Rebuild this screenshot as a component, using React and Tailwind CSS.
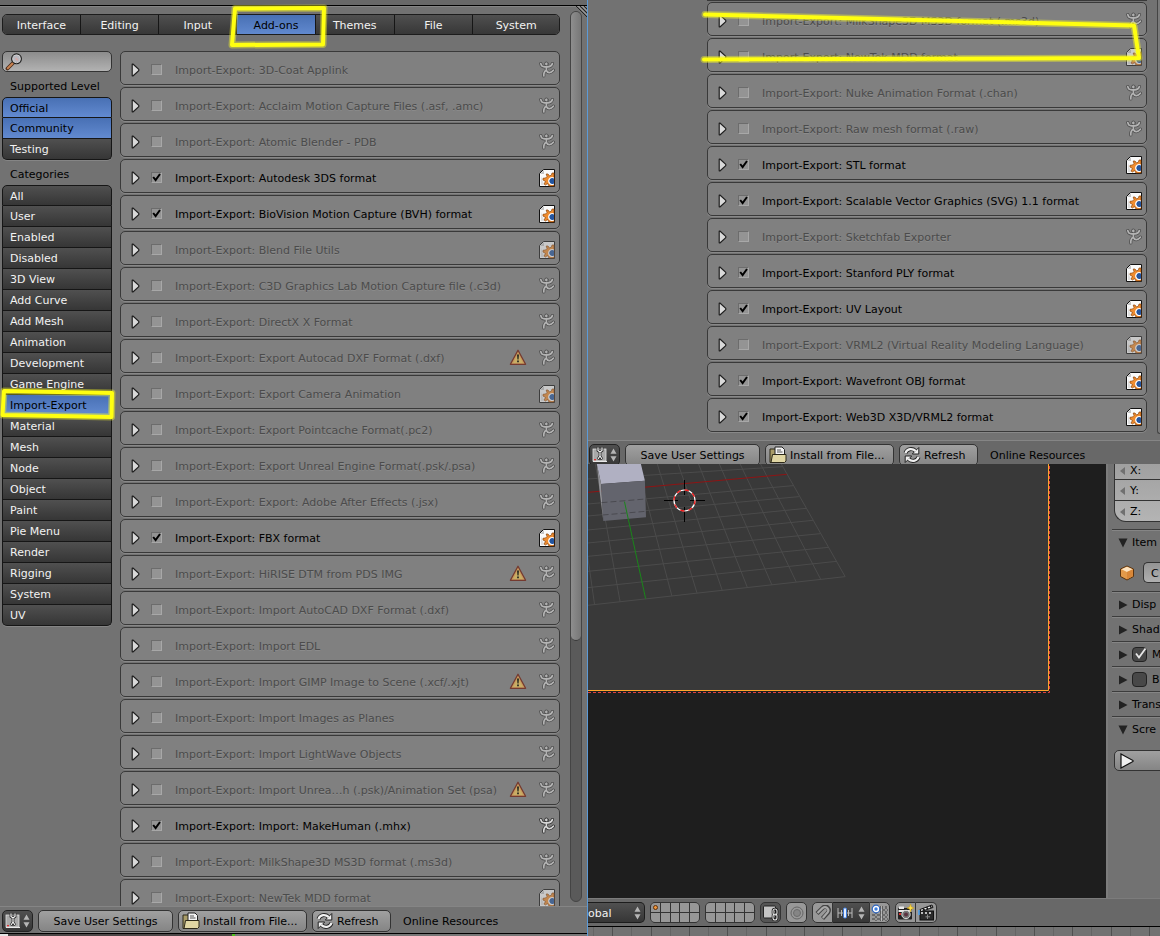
import React from "react";

const TABS = ["Interface", "Editing", "Input", "Add-ons", "Themes", "File", "System"];

const CATEGORIES = [
  "All", "User", "Enabled", "Disabled", "3D View", "Add Curve", "Add Mesh",
  "Animation", "Development", "Game Engine", "Import-Export", "Material",
  "Mesh", "Node", "Object", "Paint", "Pie Menu", "Render", "Rigging",
  "System", "UV",
];

const LEFT_ADDONS = [
  { name: "3D-Coat Applink" },
  { name: "Acclaim Motion Capture Files (.asf, .amc)" },
  { name: "Atomic Blender - PDB" },
  { name: "Autodesk 3DS format", on: true, official: true },
  { name: "BioVision Motion Capture (BVH) format", on: true, official: true },
  { name: "Blend File Utils", official: true },
  { name: "C3D Graphics Lab Motion Capture file (.c3d)" },
  { name: "DirectX X Format" },
  { name: "Export Autocad DXF Format (.dxf)", warn: true },
  { name: "Export Camera Animation", official: true },
  { name: "Export Pointcache Format(.pc2)" },
  { name: "Export Unreal Engine Format(.psk/.psa)" },
  { name: "Export: Adobe After Effects (.jsx)" },
  { name: "FBX format", on: true, official: true },
  { name: "HiRISE DTM from PDS IMG", warn: true },
  { name: "Import AutoCAD DXF Format (.dxf)" },
  { name: "Import EDL" },
  { name: "Import GIMP Image to Scene (.xcf/.xjt)", warn: true },
  { name: "Import Images as Planes" },
  { name: "Import LightWave Objects" },
  { name: "Import Unrea…h (.psk)/Animation Set (psa)", warn: true },
  { name: "Import: MakeHuman (.mhx)", on: true },
  { name: "MilkShape3D MS3D format (.ms3d)" },
  { name: "NewTek MDD format", official: true },
];

const RIGHT_ADDONS = [
  { name: "MilkShape3D MS3D format (.ms3d)" },
  { name: "NewTek MDD format", official: true },
  { name: "Nuke Animation Format (.chan)" },
  { name: "Raw mesh format (.raw)" },
  { name: "STL format", on: true, official: true },
  { name: "Scalable Vector Graphics (SVG) 1.1 format", on: true, official: true },
  { name: "Sketchfab Exporter" },
  { name: "Stanford PLY format", on: true, official: true },
  { name: "UV Layout", on: true, official: true },
  { name: "VRML2 (Virtual Reality Modeling Language)", official: true },
  { name: "Wavefront OBJ format", on: true, official: true },
  { name: "Web3D X3D/VRML2 format", on: true, official: true },
];

const DARK = "bg-linear-to-b from-[#505050] to-[#363636] text-[#f2f2f2]";
const BLUE = "bg-linear-to-b from-[#4870b4] to-[#628ad0] text-black";
const TOOL =
  "flex h-[22px] shrink-0 items-center rounded-[5px] border border-[#333] bg-linear-to-b from-[#a0a0a0] to-[#858585] text-black shadow-[0_1px_0_#858585]";

function CommunityIcon() {
  return (
    <svg viewBox="0 0 16 17" className="h-[17px] w-4" fill="none" strokeLinecap="round" strokeLinejoin="round">
      <g stroke="#2e2e2e" strokeWidth="3.2">
        <path d="M1.8 2.6 C2.3 4.8 3.6 5.8 5.4 5.8 H9 C11 5.8 12.6 4.6 13.4 2.6 M7.4 6 V9.4 M7.4 9.4 C5 10.2 4.6 11.5 4.8 15 M7.4 9.4 C8.6 12.6 11.8 12.2 14.4 9.2" />
      </g>
      <circle cx="7.4" cy="2.900" r="1.900" fill="#d0d0d0" stroke="#2e2e2e" strokeWidth="0.900" />
      <g stroke="#d6d6d6" strokeWidth="1.700">
        <path d="M1.8 2.6 C2.3 4.8 3.6 5.8 5.4 5.8 H9 C11 5.8 12.6 4.6 13.4 2.6 M7.4 6 V9.4 M7.4 9.4 C5 10.2 4.6 11.5 4.8 15 M7.4 9.4 C8.6 12.6 11.8 12.2 14.4 9.2" />
      </g>
    </svg>
  );
}

function OfficialIcon() {
  return (
    <svg viewBox="0 0 16 18" className="h-[18px] w-4">
      <path d="M4.500 0.500 H15.500 V17.500 H0.500 V4.500 Z" fill="#fafafa" stroke="#111" />
      <path d="M1 5 H5 V1 Z" fill="#c4c4c4" />
      <path d="M2 7 V16 H5 Z" fill="#dedede" />
      <path
        d="M8 7.500 L7.200 5 L9 5 L10.500 7 L12.500 6 L13 4 L15 4 V17 H10 L8.500 14.500 L6.500 16 L5 15 L6.500 12.500 L4 11 V9.300 L6.500 9 Z"
        fill="#ee8c30" stroke="#8a4208" strokeWidth="0.700"
      />
      <path d="M15 8.500 A4 4 0 1 0 15 15.500 Z" fill="#fff" />
      <path d="M15 9.500 A3 3 0 1 0 15 14.500 Z" fill="#24559f" />
    </svg>
  );
}

function WarningIcon() {
  return (
    <svg viewBox="0 0 18 17" className="h-[17px] w-[18px]">
      <path d="M9 1.3 L16.6 15.3 H1.4 Z" fill="#c89a5c" stroke="#743a30" strokeWidth="1.3" strokeLinejoin="round" />
      <path d="M9 4.500 L13.800 14 H4.200 Z" fill="#c9ae66" />
      <path d="M8 5.500 H10 L9.6 10.5 H8.4 Z M8.1 11.5 H9.9 V13.2 H8.1 Z" fill="#2c2c22" />
    </svg>
  );
}

function AddonRow({ addon, side }) {
  const id = side + "-" + addon.name.replace(/\W+/g, "-");
  return (
    <li className="flex h-[34px] shrink-0 items-center rounded-[5px] border border-[#393939] bg-[#808080] pt-[3px] pr-1 pl-2.5 shadow-[0_1px_0_#888]">
      <button type="button" aria-label={"Expand " + addon.name} className="shrink-0">
        <svg viewBox="0 0 9 14" className="h-3.5 w-[9px]">
          <path d="M1.2 1.2 V12.8 L2.2 12.8 L7.8 7.6 V6.4 L2.2 1.2 Z" fill="#d9d9d9" stroke="#202020" strokeWidth="1.2" strokeLinejoin="round" />
        </svg>
      </button>
      <span className="relative ml-[11px] flex size-[11px] shrink-0">
        <input
          id={id}
          type="checkbox"
          defaultChecked={!!addon.on}
          className="peer size-[11px] appearance-none border border-t-[#6c6c6c] border-r-[#a8a8a8] border-b-[#a8a8a8] border-l-[#6c6c6c] bg-[#949494]"
        />
        <svg viewBox="0 0 11 11" className="pointer-events-none absolute inset-0 hidden size-[11px] peer-checked:block">
          <path d="M2.2 5 L4.6 8 L9 2" fill="none" stroke="#000" strokeWidth="2" />
        </svg>
      </span>
      <label
        htmlFor={id}
        className={"ml-[13px] min-w-0 flex-1 truncate pt-0.5 " + (addon.on ? "text-black" : "text-[#4b4b4b] [text-shadow:0_1px_0_#8c8c8c]")}
      >
        {"Import-Export: " + addon.name}
      </label>
      {addon.warn && (
        <span className="mr-3 shrink-0">
          <WarningIcon />
        </span>
      )}
      <span className={"shrink-0 " + (addon.on ? "" : "opacity-60")}>
        {addon.official ? <OfficialIcon /> : <CommunityIcon />}
      </span>
    </li>
  );
}

function UpDown() {
  return (
    <svg viewBox="0 0 7 14" className="h-3.5 w-[7px] shrink-0">
      <path d="M3.5 0.5 L6.5 5.7 H0.5 Z M3.5 13.5 L6.5 8.3 H0.5 Z" fill="#b5b5b5" />
    </svg>
  );
}

function HeaderBar() {
  return (
    <>
      <button type="button" aria-label="Editor type" className={"mr-[5px] flex h-[22px] w-[31px] shrink-0 items-center justify-center gap-0.5 rounded-[5px] border border-[#222] " + DARK}>
        <svg viewBox="0 0 16 16" className="size-4">
          <rect x="1" y="2" width="13" height="12" fill="#a9a9a9" stroke="#e0e0e0" strokeWidth="0.8" />
          <path d="M1 14.5 H15" stroke="#e8e8e8" />
          <path d="M6 0.500 V3.500 L8 5 L10 3.500 V0.500 M8 5 V9 M6 12.500 L8 9 L10 12.500" stroke="#222" strokeWidth="2.800" fill="none" />
          <path d="M6 0.500 V3.500 L8 5 L10 3.500 V0.500 M8 5 V9 M6 12 L8 9 L10 12" stroke="#f4f4f4" strokeWidth="1.200" fill="none" />
          <rect x="2" y="12" width="2" height="1.3" fill="#e03030" />
        </svg>
        <UpDown />
      </button>
      <button type="button" className={TOOL + " mr-[5px] w-[135px] justify-center"}>
        <span className="pt-0.5">Save User Settings</span>
      </button>
      <button type="button" className={TOOL + " mr-[5px] w-[129px] gap-[3px] pl-[3px]"}>
        <svg viewBox="0 0 18 18" className="size-[18px] shrink-0">
          <path d="M1 3 H6 L7.5 5 V16.5 H1 Z" fill="#a99c68" stroke="#2c2819" />
          <path d="M6 1 H13 L15.5 3.5 V10 H6 Z" fill="#f4f4f4" stroke="#222" />
          <path d="M8 4 H12 M8 6 H13.5" stroke="#555" />
          <path d="M3.5 8.5 H17 V15 L15.5 16.5 H2 Z" fill="#e0d6a3" stroke="#2c2819" />
        </svg>
        <span className="pt-0.5">Install from File...</span>
      </button>
      <button type="button" className={TOOL + " mr-3 w-[79px] gap-[3px] pl-[3px]"}>
        <svg viewBox="0 0 18 18" className="size-[18px] shrink-0" fill="none" strokeLinejoin="round">
          <g stroke="#222" strokeWidth="4">
            <path d="M2.5 7 C4 2.5 9.5 2 12.5 5 M15.5 11 C14 15.5 8.5 16 5.5 13" />
          </g>
          <path d="M15.8 1.5 V8 H9.3 Z M2.2 16.5 V10 H8.7 Z" fill="#f0f0f0" stroke="#222" strokeWidth="1" />
          <path d="M2.5 7 C4 2.5 9.5 2 12.8 5.2 M15.5 11 C14 15.5 8.5 16 5.2 12.8" stroke="#f0f0f0" strokeWidth="2.3" />
        </svg>
        <span className="pt-0.5">Refresh</span>
      </button>
      <a href="#resources" className="leading-6 text-black">Online Resources</a>
    </>
  );
}

function OptionGroup({ items, selected }) {
  return (
    <div className="flex flex-col rounded-b-[5px] shadow-[0_1px_0_#858585]">
      {items.map((t) => (
        <button
          key={t}
          type="button"
          className={
            "h-[21px] border-x border-b border-[#161616] pt-0.5 pl-[7px] text-left leading-[18px] first:rounded-t-[5px] first:border-t last:rounded-b-[5px] " +
            (selected.includes(t) ? BLUE : DARK)
          }
        >
          {t}
        </button>
      ))}
    </div>
  );
}

function Preferences() {
  return (
    <section className="relative flex min-w-0 flex-col overflow-hidden border-r border-[#5b9ad8] bg-[#727272]">
      <div className="h-1.5 shrink-0 border-b border-black bg-[#686868]" />
      <div className="flex min-h-0 flex-1 gap-2.5 overflow-hidden border-t border-[#858585] pr-[5px] pl-0.5">
        <div className="flex min-w-0 flex-1 flex-col gap-4 overflow-hidden pt-[7px]">
          <nav className="grid h-[21px] shrink-0 grid-cols-[78fr_79fr_78fr_79fr_79fr_79fr_86fr] overflow-hidden rounded-[5px] border border-[#1c1c1c]">
            {TABS.map((t, i) => (
              <button
                key={t}
                type="button"
                className={"pt-0.5 leading-[18px] " + (i < 6 ? "border-r border-[#161616] " : "") + (t === "Add-ons" ? BLUE : DARK)}
              >
                {t}
              </button>
            ))}
          </nav>
          <div className="flex min-h-0 flex-1 gap-2">
            <aside className="flex w-[110px] shrink-0 flex-col">
              <div className="relative">
                <input
                  type="text"
                  aria-label="Search add-ons"
                  className="block h-[21px] w-full rounded-[5px] border border-[#333] bg-linear-to-b from-[#8c8c8c] to-[#b2b2b2] pl-6"
                />
                <svg viewBox="0 0 18 18" className="pointer-events-none absolute top-0.5 left-[3px] size-[18px]">
                  <path d="M8 10 L2.5 15.5" stroke="#4a2a18" strokeWidth="3.8" strokeLinecap="round" />
                  <path d="M8 10 L2.8 15.2" stroke="#c98352" strokeWidth="2" strokeLinecap="round" />
                  <circle cx="11.5" cy="5.8" r="4.6" fill="#b9b9c0" stroke="#222" strokeWidth="1.8" />
                  <circle cx="11.5" cy="5.8" r="4" fill="none" stroke="#eee" strokeWidth="0.8" />
                  <path d="M10.5 5 L13 7.5" stroke="#d8a8a4" strokeWidth="1.6" />
                </svg>
              </div>
              <h2 className="h-[25px] pt-[5px] pl-2 leading-5">Supported Level</h2>
              <OptionGroup items={["Official", "Community", "Testing"]} selected={["Official", "Community"]} />
              <h2 className="h-[25px] pt-[5px] pl-2 leading-5">Categories</h2>
              <OptionGroup items={CATEGORIES} selected={["Import-Export"]} />
            </aside>
            <ul className="flex min-w-0 flex-1 flex-col gap-0.5 overflow-hidden">
              {LEFT_ADDONS.map((a) => (
                <AddonRow key={a.name} addon={a} side="left" />
              ))}
            </ul>
          </div>
        </div>
        <div className="mt-1 mb-1 flex w-3 shrink-0 flex-col rounded-full border border-[#444] bg-[#5a5a5a]">
          <div className="h-[629px] rounded-full border-b border-[#3a3a3a] bg-linear-to-r from-[#8e8e8e] to-[#777]" />
        </div>
      </div>
      <footer className="flex h-[27px] shrink-0 items-start border-t border-[#858585] bg-[#727272] pt-[3px] pl-0.5">
        <HeaderBar />
      </footer>
      <div className="flex h-[3px] shrink-0 border-t border-black">
        <div className="w-2 bg-[#e5e5e5]" />
        <div className="w-56 bg-[#4c4747]" />
        <div className="w-[3px] bg-[#50c020]" />
        <div className="flex-1 bg-[#777]" />
      </div>
      <svg className="pointer-events-none absolute top-1.5 right-0 size-3" viewBox="0 0 12 12">
        <path d="M1 0 L12 11 M5 0 L12 7 M9 0 L12 3" stroke="#222" />
        <path d="M3 0 L12 9 M7 0 L12 5" stroke="#999" />
      </svg>
      <svg className="pointer-events-none absolute top-0 left-0 h-[440px] w-[340px]" viewBox="0 0 340 440" fill="none" strokeLinejoin="round">
        <g stroke="#ffff20" strokeOpacity="0.4" strokeWidth="7">
          <path d="M235 8.500 L324 8 L323 44.500 L232 45 Z" />
          <path d="M4 391 L112 393 L111.500 417 L2.500 415 Z" />
        </g>
        <g stroke="#ffff10" strokeWidth="4">
          <path d="M235 8.500 L324 8 L323 44.500 L232 45 Z" />
          <path d="M4 391 L112 393 L111.500 417 L2.500 415 Z" />
        </g>
      </svg>
    </section>
  );
}

function PreferencesTail() {
  return (
    <div className="relative h-[464px] shrink-0 overflow-hidden bg-[#727272]">
      <div className="flex h-[440px] gap-2.5">
        <ul className="ml-[119px] flex min-w-0 flex-1 flex-col gap-0.5 border-t border-[#393939] pt-px">
          {RIGHT_ADDONS.map((a) => (
            <AddonRow key={a.name} addon={a} side="right" />
          ))}
        </ul>
        <div className="mb-1.5 w-[3px] shrink-0 rounded-bl border-b border-l border-[#444] bg-[#7b7b7b]" />
      </div>
      <footer className="flex h-6 items-start border-t border-[#858585] bg-[#686868] pt-[3px] pl-px">
        <HeaderBar />
      </footer>
      <svg className="pointer-events-none absolute top-0 left-0 h-20 w-[572px]" viewBox="0 0 572 80" fill="none" strokeLinecap="round" strokeLinejoin="round">
        <path d="M117 14.500 L546 25.500 L551 58 L116 59.500" stroke="#ffff20" strokeOpacity="0.4" strokeWidth="7" />
        <path d="M117 14.500 L546 25.500 L551 58 L116 59.500" stroke="#ffff10" strokeWidth="4" />
      </svg>
    </div>
  );
}

const DEPTH = [[530, 705], [473, 638], [417, 571], [360, 504], [303, 437], [247, 368], [190, 299], [134, 230], [20, 88], [-37, 18]];
const ROWS = [[237, 534, 200], [312, 562, 257], [348, 578, 290], [390, 598, 325], [429, 617, 361], [469, 637, 401], [514, 660, 442], [563, 682, 484], [616, 705, 530]];

function Viewport() {
  return (
    <div className="relative min-w-0 flex-1 overflow-hidden bg-[#1e1e1e]">
      <svg width="518" height="434" viewBox="0 0 518 434" role="img" aria-label="3D view">
        <rect width="461" height="227" fill="#393939" />
        <g transform="scale(0.3648 0.3333) translate(0 -192)" fill="none">
          <g stroke="#4b4b4b">
            {DEPTH.map(([a, b], i) => (
              <path key={i} vectorEffect="non-scaling-stroke" d={`M${a} 192 L${b} ${530 + ((705 - b) * 86) / 705}`} />
            ))}
            {ROWS.map(([l, x, y], i) => (
              <path key={i} vectorEffect="non-scaling-stroke" d={`M0 ${l} L${x} ${y}`} />
            ))}
          </g>
          <path d="M0 277 L545 223" stroke="#8e1414" vectorEffect="non-scaling-stroke" />
          <path d="M24 192 H145 L156 242 L36 252 Z" fill="#b0b0c2" />
          <path d="M24 192 L36 252 L42 363 L32 275 Z" fill="#929297" />
          <path d="M36 252 L156 242 L159 352 L42 363 Z" fill="#63646d" />
          <path d="M37 308 L158 297 M40 345 L158 334" stroke="#4a4a50" strokeDasharray="6 3" vectorEffect="non-scaling-stroke" />
          <path d="M100 305 L158 596" stroke="#1a861a" vectorEffect="non-scaling-stroke" />
        </g>
        <path d="M76 36.500 H90 M102 36.500 H117 M96.500 16 V31 M96.500 43 V58" stroke="#000" />
        <circle cx="96.500" cy="36.500" r="10.500" fill="none" stroke="#fff" strokeWidth="1.200" />
        <circle cx="96.500" cy="36.500" r="10.500" fill="none" stroke="#f01818" strokeWidth="1.300" strokeDasharray="4.120 4.120" />
        <path d="M0 226.500 H460.500 V0" fill="none" stroke="#ffa72e" />
        <path d="M0 228.500 H461.500 V0" fill="none" stroke="#e04040" strokeDasharray="3 2" />
      </svg>
    </div>
  );
}

function PanelHead({ title, open, check }) {
  return (
    <div className="flex h-[25px] items-center border-t border-[#3c3c3c] pt-px pl-1.5 shadow-[inset_0_1px_0_#858585]">
      <button type="button" aria-label={"Toggle " + title} className="mr-1 shrink-0">
        <svg viewBox="0 0 10 10" className="size-2.5">
          <path d={open ? "M0.5 0.5 H9.5 L5 9.5 Z" : "M1 0.5 V9.500 L9.500 5 Z"} fill="#222" />
        </svg>
      </button>
      {check === undefined ? (
        <span>{title}</span>
      ) : (
        <label className="relative flex items-center gap-[5px]">
          <input type="checkbox" defaultChecked={check} className="peer size-[15px] appearance-none rounded border border-[#222] bg-[#484848]" />
          <svg viewBox="0 0 15 15" className="pointer-events-none absolute top-0 left-0 hidden size-[15px] peer-checked:block">
            <path d="M4 6.500 L7 10.500 L13.500 1.500" fill="none" stroke="#e8e8e8" strokeWidth="1.800" />
          </svg>
          {title}
        </label>
      )}
    </div>
  );
}

function Properties() {
  return (
    <aside className="w-[54px] shrink-0 overflow-hidden border-l-2 border-[#7c7c7c] bg-[#727272] pl-1">
      <div className="ml-0.5 overflow-hidden rounded-bl-xl border-b border-l border-[#333] bg-linear-to-b from-[#a0a0a0] to-[#b4b4b4]">
        {["X:", "Y:", "Z:"].map((axis, i) => (
          <button
            key={axis}
            type="button"
            className={"flex w-full items-center gap-[5px] pl-[5px] " + (i === 0 ? "h-4 border-b border-[#333] pb-0.5" : i === 1 ? "h-[21px] border-b border-[#333] pt-0.5" : "h-5 pt-0.5")}
          >
            <svg viewBox="0 0 5 8" className="h-2 w-[5px]"><path d="M5 0 V8 L0 4 Z" fill="#707070" /></svg>
            {axis}
          </button>
        ))}
      </div>
      <div className="mt-[7px]">
        <PanelHead title="Item" open />
        <div className="flex h-[37px] items-center pl-[7px]">
          <svg viewBox="0 0 16 16" className="mr-2 size-4 shrink-0">
            <path d="M8 1 L14.500 4 V11.500 L8 15 L1.500 11.500 V4 Z" fill="#e39a4a" stroke="#5a3410" />
            <path d="M8 1.800 L13.500 4.300 L8 7 L2.500 4.300 Z" fill="#fde3bf" />
            <path d="M8 7 L13.800 4.500 V11 L8 14.300 Z" fill="#d98738" />
          </svg>
          <input
            type="text"
            aria-label="Object name"
            defaultValue="C"
            className="h-[21px] min-w-0 flex-1 rounded-l-[5px] border border-r-0 border-[#333] bg-linear-to-b from-[#939393] to-[#b0b0b0] pt-0.5 pl-[7px]"
          />
        </div>
        <PanelHead title="Disp" />
        <PanelHead title="Shad" />
        <PanelHead title="M" check={true} />
        <PanelHead title="B" check={false} />
        <PanelHead title="Trans" />
        <PanelHead title="Scre" open />
      </div>
      <button type="button" aria-label="Play" className="mt-[9px] ml-0.5 flex h-[21px] w-full items-center rounded-l-[5px] border border-[#333] bg-linear-to-b from-[#a0a0a0] to-[#858585] pl-[5px]">
        <svg viewBox="0 0 14 16" className="h-4 w-3.5"><path d="M1 1 V15 L13 8.500 V7.500 Z" fill="#f0f0f0" stroke="#111" strokeWidth="1.200" /></svg>
      </button>
    </aside>
  );
}

function Layers({ active }) {
  return (
    <div className="grid h-[21px] w-[50px] shrink-0 grid-cols-5 grid-rows-2 gap-px overflow-hidden rounded-[5px] border border-[#333] bg-[#333]">
      {Array.from({ length: 10 }, (_, i) => (
        <button key={i} type="button" aria-label={"Layer " + (i + 1)} className="flex items-center justify-center bg-[#979797]">
          {active && i === 0 && <span className="size-[5px] rounded-full border border-[#5c2f08] bg-[#f0963c]" />}
        </button>
      ))}
    </div>
  );
}

const ICON_BTN = "flex h-[21px] w-[21px] shrink-0 items-center justify-center border border-[#333]";

function ViewHeader() {
  return (
    <div className="flex h-7 shrink-0 items-center gap-[5px] overflow-hidden border-t border-[#7c7c7c] bg-[#686868]">
      <div className={"flex h-[21px] w-[57px] shrink-0 items-center justify-between rounded-r-[5px] border border-l-0 border-[#1c1c1c] pr-[3px] " + DARK}>
        <select aria-label="Transform orientation" className="w-10 appearance-none pt-0.5">
          <option>obal</option>
        </select>
        <UpDown />
      </div>
      <Layers active />
      <Layers />
      <button type="button" aria-label="Lock to scene" className={ICON_BTN + " rounded-[5px] bg-[#555]"}>
        <svg viewBox="0 0 16 16" className="size-4">
          <rect x="0.500" y="1" width="12" height="12" rx="1" fill="#c4c4c4" stroke="#222" />
          <rect x="10" y="4" width="4" height="6" rx="2" fill="none" stroke="#111" strokeWidth="2.600" />
          <rect x="10" y="9" width="4" height="6" rx="2" fill="none" stroke="#111" strokeWidth="2.600" />
          <rect x="10" y="4" width="4" height="6" rx="2" fill="none" stroke="#e8e8e8" strokeWidth="1.100" />
          <rect x="10" y="9" width="4" height="6" rx="2" fill="none" stroke="#e8e8e8" strokeWidth="1.100" />
        </svg>
      </button>
      <button type="button" aria-label="Proportional editing" className={ICON_BTN + " rounded-[5px] bg-[#989898]"}>
        <svg viewBox="0 0 16 16" className="size-4" fill="none">
          <circle cx="8" cy="8" r="6" stroke="#666" />
          <circle cx="8" cy="8" r="3.500" fill="#858585" stroke="#6c6c6c" />
        </svg>
      </button>
      <div className="flex shrink-0">
        <button type="button" aria-label="Snap" className={ICON_BTN + " rounded-l-[5px] bg-[#989898]"}>
          <svg viewBox="0 0 16 16" className="size-4" fill="none">
            <path d="M2 8.500 L7.500 3 C11.500 -0.500 16 4 12.800 7.800 L7.500 13.500" stroke="#444" strokeWidth="4.200" />
            <path d="M2.500 8 L7.500 3.200 C11 0.500 15 4.300 12.500 7.500 L7.800 13" stroke="#a8a8a8" strokeWidth="2.200" />
          </svg>
        </button>
        <button type="button" aria-label="Snap element" className={"flex h-[21px] w-9 shrink-0 items-center justify-between border-y border-[#222] px-1 " + DARK}>
          <svg viewBox="0 0 16 16" className="size-4 shrink-0">
            <path d="M1 3 V13 M15 3 V13 M4.500 5 V11 M11.500 5 V11 M1 8 H15" stroke="#bbb" />
            <rect x="6.500" y="3" width="3" height="10" rx="1" fill="#e4efff" stroke="#3c78d8" />
          </svg>
          <UpDown />
        </button>
        <button type="button" aria-label="Snap to grid" className={ICON_BTN + " rounded-r-[5px] bg-[#989898]"}>
          <svg viewBox="0 0 17 17" className="size-[17px]" fill="none">
            <path d="M5 2 V17 M10.500 2 V17 M15 2 V17 M1 6 H17 M1 11 H17 M1 15 H17" stroke="#222" strokeWidth="2" />
            <path d="M5 2 V17 M10.500 2 V17 M15 2 V17 M1 6 H17 M1 11 H17 M1 15 H17" stroke="#d8d8d8" strokeWidth="0.800" />
            <circle cx="5" cy="5" r="3.800" fill="#fff" stroke="#2f66c0" strokeWidth="1.200" />
            <circle cx="5" cy="5" r="1.700" fill="#3b7fe0" />
          </svg>
        </button>
      </div>
      <div className="flex shrink-0">
        <button type="button" aria-label="Render image" className={ICON_BTN + " rounded-l-[5px] bg-[#979797]"}>
          <svg viewBox="0 0 17 17" className="size-[17px]">
            <rect x="1" y="4" width="14" height="11.500" rx="1" fill="#222" />
            <path d="M1.500 6 H14.500 V8 H1.500 Z M2 2.500 H7 V5 H2 Z" fill="#e8e8e8" />
            <circle cx="9" cy="10.500" r="4.200" fill="#777" stroke="#ddd" />
            <circle cx="9" cy="10.500" r="2" fill="#5b3340" />
            <rect x="2" y="9" width="2" height="2" fill="#e02828" />
            <path d="M13.500 0 L14.500 3 L17 4 L14.500 5 L13.500 8 L12.500 5 L10 4 L12.500 3 Z" fill="#ffe04a" stroke="#c89b10" strokeWidth="0.500" />
          </svg>
        </button>
        <button type="button" aria-label="Render animation" className={ICON_BTN + " rounded-r-[5px] border-l-0 bg-[#979797]"}>
          <svg viewBox="0 0 17 17" className="size-[17px]">
            <rect x="2" y="7" width="13.500" height="9" fill="#2b2b2b" stroke="#111" />
            <path d="M2 5.500 L14 1 L15 3.500 L3 7.500 Z" fill="#f0f0f0" stroke="#111" />
            <path d="M5 4.500 L6.500 6.200 M8.500 3.200 L10 5 M12 2 L13.500 3.800" stroke="#111" strokeWidth="1.600" />
            <path d="M3 9 H15" stroke="#eee" strokeWidth="1.600" strokeDasharray="2 2" />
            <path d="M1 6 V11" stroke="#4aa0f0" strokeWidth="1.500" />
            <path d="M9.500 10.500 V15 M7.500 12.800 H12" stroke="#888" />
          </svg>
        </button>
      </div>
    </div>
  );
}

export default function App() {
  return (
    <main className="grid h-screen grid-cols-[588fr_572fr] grid-rows-[minmax(0,1fr)] overflow-hidden bg-[#727272] font-['DejaVu_Sans',sans-serif] text-[11px] leading-4 whitespace-nowrap text-black">
      <Preferences />
      <section className="flex min-w-0 flex-col overflow-hidden">
        <PreferencesTail />
        <div className="flex min-h-0 flex-1">
          <Viewport />
          <Properties />
        </div>
        <ViewHeader />
        <div className="h-2.5 shrink-0 border-t border-black bg-[#727272]">
          <svg width="100%" height="9" aria-hidden="true">
            {Array.from({ length: 30 }, (_, i) => (
              <rect key={i} x={5 + Math.round(i * 19.17)} width="1" height="9" fill={i % 2 ? "#505050" : "#646464"} />
            ))}
          </svg>
        </div>
      </section>
    </main>
  );
}
